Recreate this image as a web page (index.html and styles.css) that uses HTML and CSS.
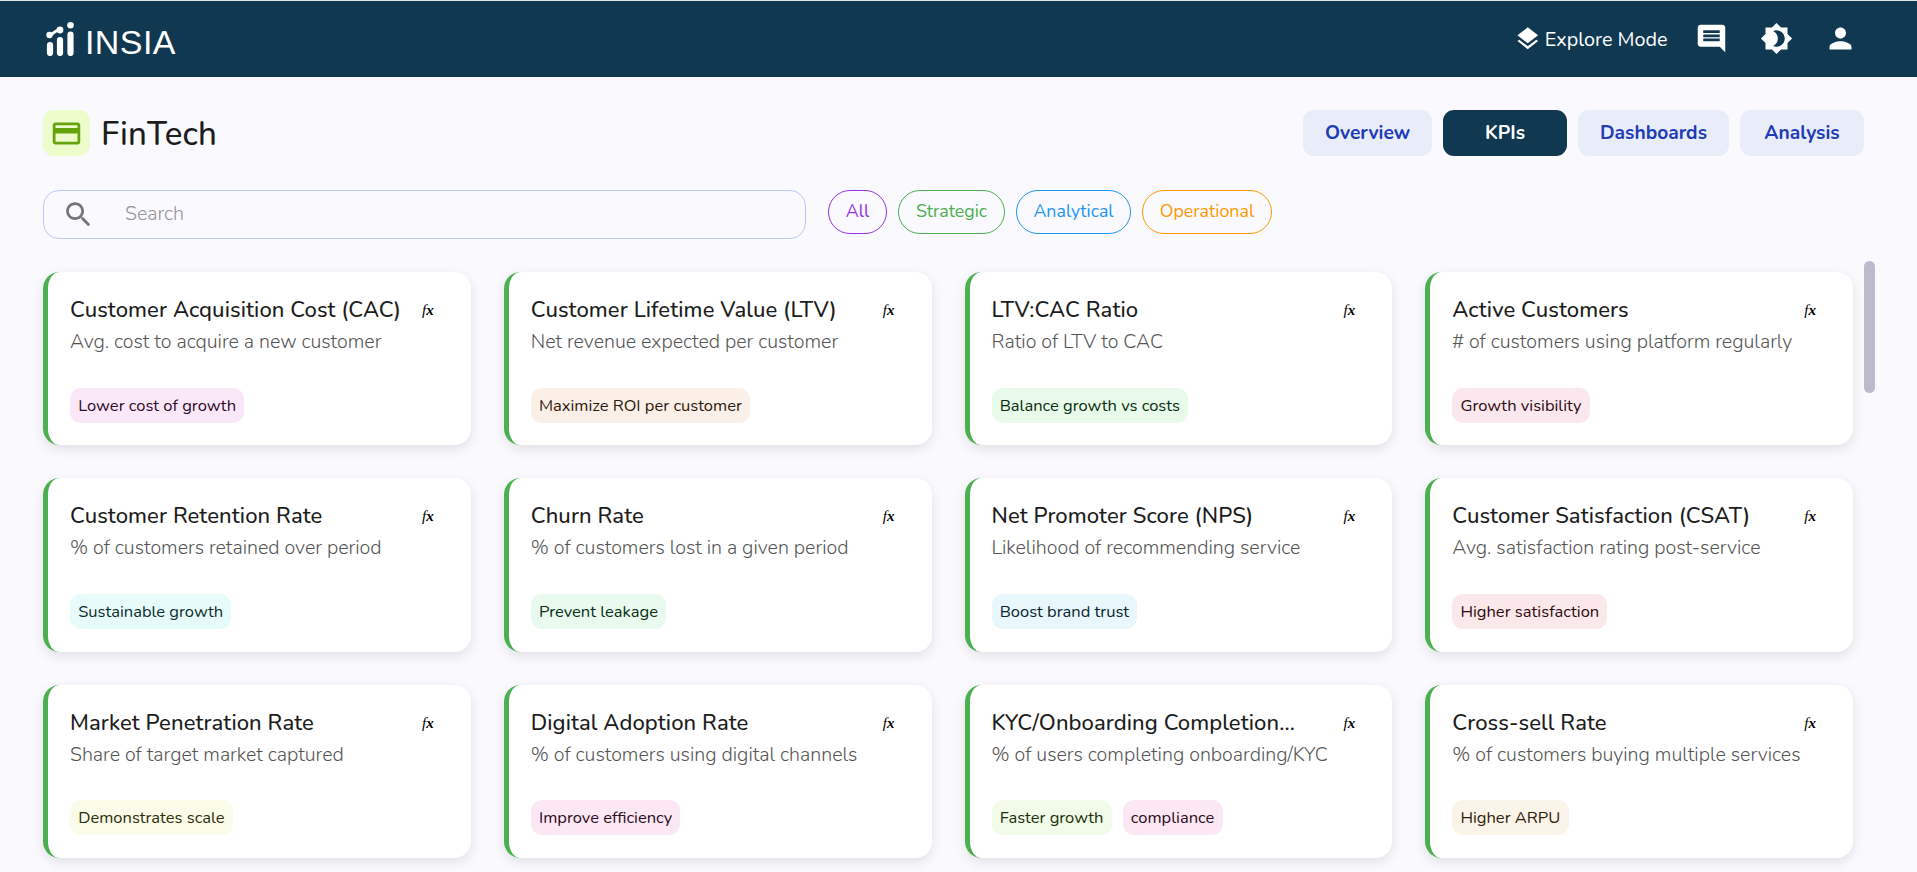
FILE: index.html
```
<!DOCTYPE html>
<html lang="en">
<head>
    <meta charset="UTF-8">
    <meta name="viewport" content="width=device-width, initial-scale=1.0">
    <title>INSIA - FinTech KPIs</title>
    <link rel="stylesheet" href="styles.css">
</head>
<body>
    <header class="navbar">
        <div class="logo">
            <svg width="28" height="34" viewBox="0 0 28 34" fill="#fff" stroke="#fff">
                <path d="M4 23v8M14 18v13M24.500 12.500v18.500" stroke-width="6.200" stroke-linecap="round"/>
                <path d="M3.500 13C8 12 9 8 14 7.800" stroke-width="3" fill="none"/>
                <circle cx="3.500" cy="13" r="3.200" stroke="none"/>
                <circle cx="14" cy="8" r="3.400" stroke="none"/>
                <circle cx="24.500" cy="3.300" r="3.300" stroke="none"/>
            </svg>
            <span class="logo-text">INSIA</span>
        </div>
        <nav class="nav-actions">
            <a class="explore">
                <svg class="icon-sm" viewBox="0 0 24 24"><path d="M11.990 18.540l-7.370-5.730L3 14.070l9 7 9-7-1.630-1.270-7.380 5.740zM12 16l7.360-5.730L21 9l-9-7-9 7 1.630 1.270L12 16z"/></svg>
                <span>Explore Mode</span>
            </a>
            <svg class="icon" viewBox="0 0 24 24"><path d="M21.990 4c0-1.100-.89-2-1.990-2H4c-1.100 0-2 .9-2 2v12c0 1.100.9 2 2 2h14l4 4-.01-18zM18 14H6v-2h12v2zm0-3H6V9h12v2zm0-3H6V6h12v2z"/></svg>
            <svg class="icon" viewBox="0 0 24 24"><path d="M20 15.310L23.310 12 20 8.690V4h-4.690L12 .69 8.690 4H4v4.690L.69 12 4 15.310V20h4.690L12 23.310 15.310 20H20v-4.690zM12 18c-.89 0-1.740-.2-2.500-.55C11.560 16.500 13 14.420 13 12s-1.440-4.500-3.500-5.450C10.260 6.200 11.110 6 12 6c3.310 0 6 2.690 6 6s-2.690 6-6 6z"/></svg>
            <svg class="icon" viewBox="0 0 24 24"><path d="M12 12c2.210 0 4-1.790 4-4s-1.790-4-4-4-4 1.790-4 4 1.790 4 4 4zm0 2c-2.670 0-8 1.340-8 4v2h16v-2c0-2.660-5.330-4-8-4z"/></svg>
        </nav>
    </header>

    <main class="content">
        <div class="page-head">
            <div class="page-icon">
                <svg class="icon" viewBox="0 0 24 24"><path d="M20 4H4c-1.110 0-1.990.89-1.990 2L2 18c0 1.110.89 2 2 2h16c1.110 0 2-.89 2-2V6c0-1.110-.89-2-2-2zm0 14H4v-6h16v6zm0-10H4V6h16v2z"/></svg>
            </div>
            <h1>FinTech</h1>
            <div class="tabs">
                <button class="tab tab-overview">Overview</button>
                <button class="tab active">KPIs</button>
                <button class="tab tab-dash">Dashboards</button>
                <button class="tab">Analysis</button>
            </div>
        </div>

        <div class="filters">
            <div class="search">
                <svg class="icon" viewBox="0 0 24 24"><path d="M15.500 14h-.79l-.28-.27C15.410 12.590 16 11.110 16 9.500 16 5.910 13.090 3 9.500 3S3 5.910 3 9.500 5.910 16 9.500 16c1.610 0 3.090-.59 4.230-1.570l.27.28v.79l5 4.990L20.490 19l-4.990-5zm-6 0C7.010 14 5 11.990 5 9.500S7.010 5 9.500 5 14 7.010 14 9.500 11.990 14 9.500 14z"/></svg>
                <input type="text" placeholder="Search">
            </div>
            <span class="pill pill-all">All</span>
            <span class="pill pill-strategic">Strategic</span>
            <span class="pill pill-analytical">Analytical</span>
            <span class="pill pill-operational">Operational</span>
        </div>

        <div class="board">
            <div class="cards">
                <div class="card">
                    <div class="card-head"><h2>Customer Acquisition Cost (CAC)</h2><span class="fx"><i>f</i>x</span></div>
                    <p>Avg. cost to acquire a new customer</p>
                    <div class="tags"><span class="tag tag-magenta">Lower cost of growth</span></div>
                </div>
                <div class="card">
                    <div class="card-head"><h2>Customer Lifetime Value (LTV)</h2><span class="fx"><i>f</i>x</span></div>
                    <p>Net revenue expected per customer</p>
                    <div class="tags"><span class="tag tag-peach">Maximize ROI per customer</span></div>
                </div>
                <div class="card">
                    <div class="card-head"><h2>LTV:CAC Ratio</h2><span class="fx"><i>f</i>x</span></div>
                    <p>Ratio of LTV to CAC</p>
                    <div class="tags"><span class="tag tag-green">Balance growth vs costs</span></div>
                </div>
                <div class="card">
                    <div class="card-head"><h2>Active Customers</h2><span class="fx"><i>f</i>x</span></div>
                    <p># of customers using platform regularly</p>
                    <div class="tags"><span class="tag tag-rose">Growth visibility</span></div>
                </div>
                <div class="card">
                    <div class="card-head"><h2>Customer Retention Rate</h2><span class="fx"><i>f</i>x</span></div>
                    <p>% of customers retained over period</p>
                    <div class="tags"><span class="tag tag-cyan">Sustainable growth</span></div>
                </div>
                <div class="card">
                    <div class="card-head"><h2>Churn Rate</h2><span class="fx"><i>f</i>x</span></div>
                    <p>% of customers lost in a given period</p>
                    <div class="tags"><span class="tag tag-mint">Prevent leakage</span></div>
                </div>
                <div class="card">
                    <div class="card-head"><h2>Net Promoter Score (NPS)</h2><span class="fx"><i>f</i>x</span></div>
                    <p>Likelihood of recommending service</p>
                    <div class="tags"><span class="tag tag-sky">Boost brand trust</span></div>
                </div>
                <div class="card">
                    <div class="card-head"><h2>Customer Satisfaction (CSAT)</h2><span class="fx"><i>f</i>x</span></div>
                    <p>Avg. satisfaction rating post-service</p>
                    <div class="tags"><span class="tag tag-red">Higher satisfaction</span></div>
                </div>
                <div class="card">
                    <div class="card-head"><h2>Market Penetration Rate</h2><span class="fx"><i>f</i>x</span></div>
                    <p>Share of target market captured</p>
                    <div class="tags"><span class="tag tag-yellow">Demonstrates scale</span></div>
                </div>
                <div class="card">
                    <div class="card-head"><h2>Digital Adoption Rate</h2><span class="fx"><i>f</i>x</span></div>
                    <p>% of customers using digital channels</p>
                    <div class="tags"><span class="tag tag-pink">Improve efficiency</span></div>
                </div>
                <div class="card">
                    <div class="card-head"><h2>KYC/Onboarding Completion...</h2><span class="fx"><i>f</i>x</span></div>
                    <p>% of users completing onboarding/KYC</p>
                    <div class="tags"><span class="tag tag-lime">Faster growth</span><span class="tag tag-pink">compliance</span></div>
                </div>
                <div class="card">
                    <div class="card-head"><h2>Cross-sell Rate</h2><span class="fx"><i>f</i>x</span></div>
                    <p>% of customers buying multiple services</p>
                    <div class="tags"><span class="tag tag-orange">Higher ARPU</span></div>
                </div>
            </div>
            <div class="scroll-thumb"></div>
        </div>
    </main>
</body>
</html>
```
FILE: styles.css
```
* {
    box-sizing: border-box;
}
body {
    margin: 0;
    height: 872px;
    overflow: hidden;
    background-color: #f9f9fe;
    color: #1c1c1c;
    font-family: Nunito, Lato, "Noto Sans", sans-serif;
}
h1, h2, p {
    margin: 0;
}
.icon {
    width: 33px;
    height: 33px;
    flex: none;
    fill: currentColor;
}
.icon-sm {
    width: 27.5px;
    height: 27.5px;
    fill: currentColor;
}

/* top bar */
.navbar {
    display: flex;
    justify-content: space-between;
    height: 77px;
    padding: 0 60px 0 46px;
    border-top: 1px solid #dce6e4;
    background-color: #103851;
    color: white;
}
.logo {
    display: flex;
    gap: 11px;
    padding-top: 21px;
}
.logo-text {
    font-family: "Liberation Sans", Arial, sans-serif;
    font-size: 34px;
    line-height: 41px;
    letter-spacing: 0.4px;
}
.nav-actions {
    display: flex;
    align-items: center;
    gap: 31.5px;
    padding-bottom: 1px;
}
.explore {
    display: flex;
    align-items: center;
    gap: 3px;
    margin-right: -4px;
    font-size: 19.8px;
}
.explore span {
    padding-top: 2px;
}

.content {
    padding: 33px 42px 0 43px;
}
.page-head {
    display: flex;
    height: 46px;
}
.page-icon {
    display: flex;
    align-items: center;
    justify-content: center;
    width: 47px;
    border-radius: 11px;
    background-color: #ecfccb;
    color: #65a30d;
}
h1 {
    margin-left: 11px;
    font-size: 33px;
    font-weight: 500;
    line-height: 49px;
    letter-spacing: 0.15px;
}
.tabs {
    display: flex;
    gap: 11px;
    margin-left: auto;
    margin-right: 11px;
}
.tab {
    width: 124px;
    padding: 0;
    border: none;
    border-radius: 11px;
    background-color: #e8edf9;
    color: #1e3bb8;
    font-family: inherit;
    font-size: 19.2px;
    font-weight: 700;
}
.tab-overview {
    width: 129px;
}
.tab-dash {
    width: 151px;
}
.tab.active {
    background-color: #103851;
    color: white;
}

/* search and type filters */
.filters {
    display: flex;
    align-items: flex-start;
    gap: 11px;
    margin-top: 34px;
}
.search {
    display: flex;
    align-items: center;
    width: 763px;
    height: 49px;
    margin-right: 11px;
    padding-left: 18px;
    border: 1px solid #bcc8fb;
    border-radius: 16px;
    color: #757575;
}
.search input {
    flex: 1;
    margin-left: 30px;
    padding: 0 0 2px;
    border: none;
    outline: none;
    background: none;
    font-family: inherit;
    font-size: 19.6px;
    font-weight: 300;
}
.search input::placeholder {
    color: #949498;
}
.pill {
    height: 44px;
    border: 1px solid;
    border-radius: 22px;
    font-size: 17.8px;
    line-height: 41px;
    text-align: center;
}
.pill-all {
    width: 59px;
    color: #9333ea;
}
.pill-strategic {
    width: 107px;
    color: #4caf50;
}
.pill-analytical {
    width: 115px;
    color: #2196f3;
}
.pill-operational {
    width: 130px;
    color: #ff9800;
}

/* kpi cards */
.board {
    display: flex;
    margin-top: 22px;
}
.cards {
    flex: none;
    display: grid;
    grid-template-columns: repeat(4, 1fr);
    gap: 33px;
    width: 1810px;
    padding-top: 11.35px;
}
.card {
    height: 173.1px;
    padding: 22px;
    border-left: 5px solid #4caf50;
    border-radius: 16.5px;
    background-color: white;
    box-shadow: 0 4px 12px rgba(0, 0, 0, 0.1);
}
.card-head {
    display: flex;
    justify-content: space-between;
    padding-right: 15px;
}
.card h2 {
    font-size: 22px;
    font-weight: 500;
    line-height: 32px;
    letter-spacing: 0.09px;
    white-space: nowrap;
}
.fx {
    color: black;
    font-family: "Liberation Serif", serif;
    font-size: 15px;
    font-style: italic;
    font-weight: 700;
    line-height: 33px;
    height: 32px;
}
.fx i {
    font-weight: 400;
}
.card p {
    color: #555;
    font-size: 19.6px;
    font-weight: 300;
    line-height: 31px;
    white-space: nowrap;
}
.tags {
    display: flex;
    gap: 11px;
    margin-top: 30.6px;
}
.tag {
    height: 35.2px;
    padding: 0 8.2px;
    border-radius: 11px;
    font-size: 16.5px;
    line-height: 35px;
}
.tag-magenta { background-color: #fae8f8; color: #2e0a2a; }
.tag-peach { background-color: #fbf0e8; color: #2e180a; }
.tag-green { background-color: #e8fbea; color: #0a2e0e; }
.tag-rose { background-color: #fbe8ee; color: #2e0a15; }
.tag-cyan { background-color: #e8fbfb; color: #0a2e2e; }
.tag-mint { background-color: #e8fbee; color: #0a2e15; }
.tag-sky { background-color: #e8f7fb; color: #0a262e; }
.tag-red { background-color: #fbe8ea; color: #2e0a0e; }
.tag-yellow { background-color: #fafbe8; color: #2c2e0a; }
.tag-pink { background-color: #fbe8f4; color: #2e0a20; }
.tag-lime { background-color: #f1fbe8; color: #1a2e0a; }
.tag-orange { background-color: #fbf4e8; color: #2e200a; }

.scroll-thumb {
    width: 11px;
    height: 132px;
    margin-left: 11px;
    border-radius: 6px;
    background-color: #bbbbcc;
}
```
